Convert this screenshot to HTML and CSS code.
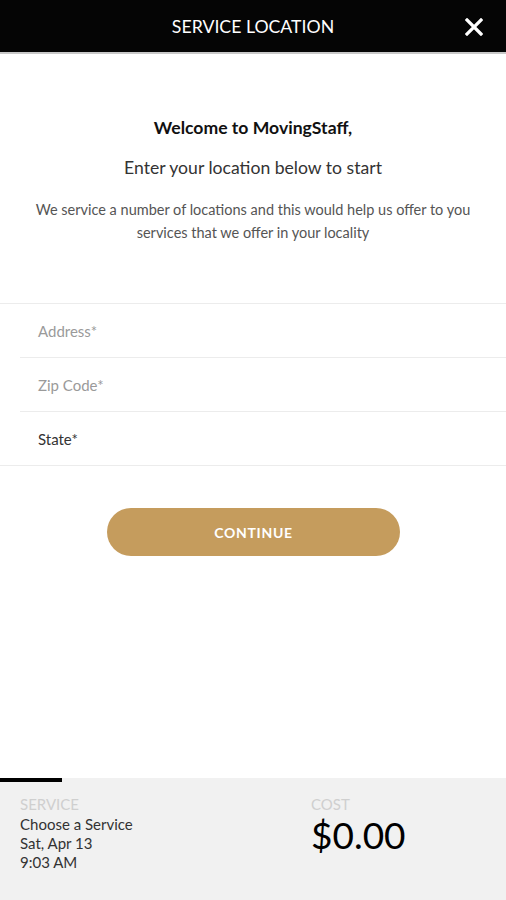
FILE: index.html
```html
<!DOCTYPE html>
<html>
<head>
<meta charset="utf-8">
<link rel="stylesheet" href="styles.css">
</head>
<body>
<div class="app">
  <header class="topbar">
    <span class="title">SERVICE LOCATION</span>
    <svg class="close" width="18" height="18" viewBox="0 0 18 18"><path d="M2 2 L16 16 M16 2 L2 16" stroke="#fff" stroke-width="3.2" stroke-linecap="square"/></svg>
  </header>
  <main class="content">
    <section class="intro">
      <h1 class="welcome">Welcome to MovingStaff,</h1>
      <p class="lead">Enter your location below to start</p>
      <p class="desc">We service a number of locations and this would help us offer to you services that we offer in your locality</p>
    </section>
    <div class="form">
      <div class="field"><span class="ph">Address*</span></div>
      <div class="field"><span class="ph">Zip Code*</span></div>
      <div class="field last"><span class="ph dark">State*</span></div>
    </div>
    <div class="btnwrap"><button class="continue">CONTINUE</button></div>
  </main>
  <footer class="summary">
    <div class="progress"></div>
    <div class="cols">
      <div class="col service">
        <div class="label">SERVICE</div>
        <div class="info">Choose a Service</div>
        <div class="info">Sat, Apr 13</div>
        <div class="info">9:03 AM</div>
      </div>
      <div class="col cost">
        <div class="label">COST</div>
        <div class="price">$0.00</div>
      </div>
    </div>
  </footer>
</div>
</body>
</html>
```
FILE: styles.css
```css
* { box-sizing: border-box; }
html, body { margin: 0; padding: 0; }
body {
  font-family: Lato, "Open Sans", "Liberation Sans", sans-serif;
  background: #fff;
  width: 506px;
  height: 900px;
  overflow: hidden;
}
.app {
  display: flex;
  flex-direction: column;
  height: 900px;
}
.topbar {
  height: 54px;
  background: #050505;
  border-bottom: 2px solid #c8c8c8;
  display: flex;
  align-items: center;
  justify-content: center;
  position: relative;
  flex: none;
}
.title {
  color: #fff;
  font-size: 17.7px;
  font-weight: 400;
  margin-top: 1px;
}
.close {
  position: absolute;
  left: 465px;
  top: 18px;
}
.content {
  flex: 1;
}
.intro {
  text-align: center;
  padding: 63px 10px 0;
}
.welcome {
  margin: 0;
  font-size: 17.6px;
  font-weight: 700;
  color: #111;
  line-height: 22px;
}
.lead {
  margin: 18px 0 0;
  font-size: 17.6px;
  color: #333;
  line-height: 22px;
}
.desc {
  margin: 19px auto 0;
  font-size: 14.5px;
  color: #555;
  line-height: 23px;
  width: 470px;
}
.form {
  margin-top: 59px;
  border-top: 1px solid #ececec;
}
.field {
  height: 54px;
  margin-left: 20px;
  padding-left: 18px;
  display: flex;
  align-items: center;
  border-bottom: 1px solid #ececec;
}
.field.last {
  margin-left: 0;
  padding-left: 38px;
}
.ph {
  font-size: 15px;
  color: #9a9a9a;
}
.ph.dark { color: #333; }
.btnwrap {
  display: flex;
  justify-content: center;
  padding-top: 42px;
}
.continue {
  width: 293px;
  height: 48px;
  margin-left: 1px;
  border: none;
  border-radius: 24px;
  background: #c59c5d;
  color: #fff;
  font-family: Lato, "Open Sans", sans-serif;
  font-weight: 700;
  font-size: 14px;
  letter-spacing: 0.7px;
}
.summary {
  flex: none;
  height: 122px;
  background: #f1f1f1;
  position: relative;
}
.progress {
  position: absolute;
  left: 0;
  top: 0;
  width: 62px;
  height: 4px;
  background: #000;
}
.cols {
  display: flex;
  padding-top: 17px;
}
.col.service {
  width: 311px;
  padding-left: 20px;
}
.label {
  font-size: 15px;
  color: #cfcfcf;
  line-height: 19px;
}
.info {
  font-size: 15px;
  color: #333;
  line-height: 19px;
}
.service .label { margin-bottom: 1px; }
.price {
  font-size: 37px;
  color: #000;
  line-height: 36px;
  margin-top: 3px;
}
```
